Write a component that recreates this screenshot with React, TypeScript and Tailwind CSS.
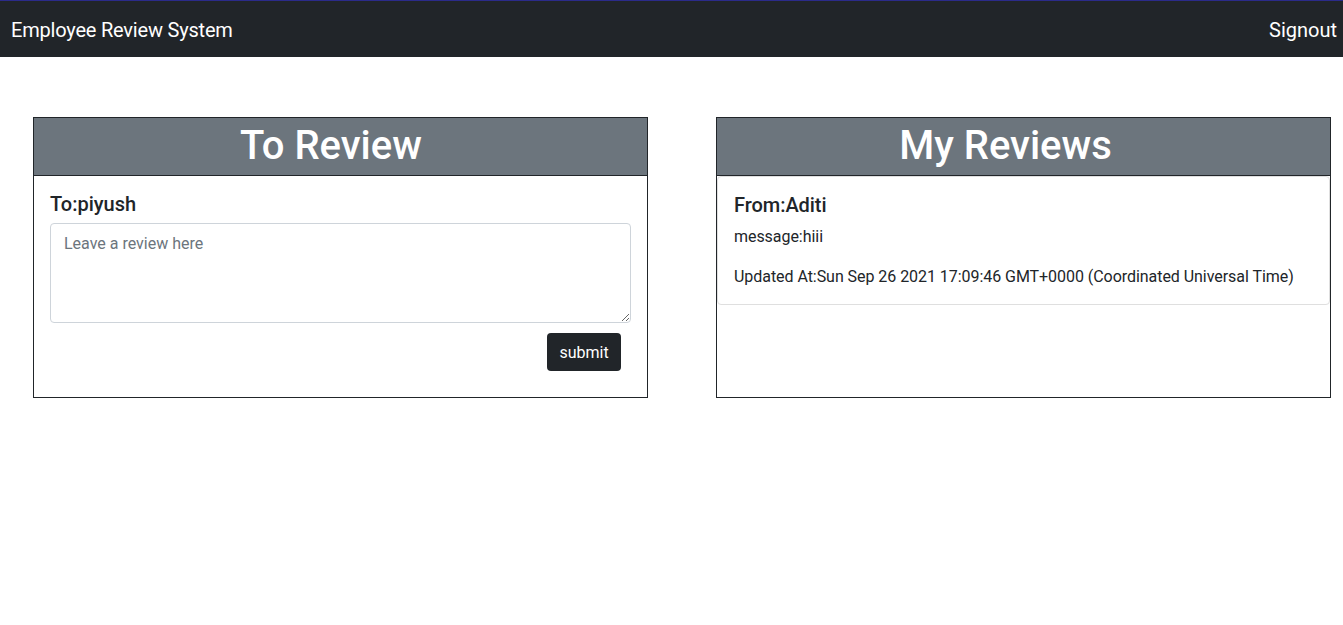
import React, { useState } from 'react';

const reviews = [
    {
        from: 'Aditi',
        message: 'hiii',
        updatedAt: 'Sun Sep 26 2021 17:09:46 GMT+0000 (Coordinated Universal Time)',
    },
];

const CardHeader: React.FC<{ title: string; shift: string }> = ({ title, shift }) => (
    <div className={`h-[58px] bg-[#6c757d] border-b border-[#212529] flex items-center justify-center ${shift}`}>
        <h1 className="text-[40px] leading-[48px] font-medium text-white -mt-[2px]">{title}</h1>
    </div>
);

const App: React.FC = () => {
    const [review, setReview] = useState('');

    return (
        <div className="min-h-[625px] bg-white text-[#212529]" style={{ fontFamily: 'Roboto, "Open Sans", sans-serif' }}>
            {/* navbar */}
            <nav className="h-[57px] bg-[#212529] border-t border-[#2b2b8a] flex items-center justify-between pl-[11px] pr-[6px] pt-[2px]">
                <span className="text-[20px] leading-[24px] text-white tracking-[-0.2px]">Employee Review System</span>
                <span className="text-[20px] leading-[24px] text-white">Signout</span>
            </nav>

            <main className="flex gap-[68px] pl-[33px] pt-[60px]">
                {/* To Review */}
                <section className="w-[615px] h-[281px] border border-[#212529] flex flex-col">
                    <CardHeader title="To Review" shift="pr-[19px]" />
                    <div className="px-4 pt-4">
                        <h5 className="text-[20px] leading-[24px] font-medium mb-[7px]">To:piyush</h5>
                        <textarea
                            value={review}
                            onChange={e => setReview(e.target.value)}
                            placeholder="Leave a review here"
                            className="block w-full h-[100px] border border-[#ced4da] rounded-[4px] pl-[13px] pr-3 pt-[8px] text-[16px] leading-[24px] placeholder:text-[#6c757d] outline-none resize-y"
                        />
                        <div className="flex justify-end mt-[10px] mr-[10px]">
                            <button className="h-[38px] w-[74px] pt-[2px] bg-[#212529] text-white text-[16px] rounded-[4px]">submit</button>
                        </div>
                    </div>
                </section>

                {/* My Reviews */}
                <section className="w-[615px] h-[281px] border border-[#212529] flex flex-col">
                    <CardHeader title="My Reviews" shift="pr-[36px]" />
                    {reviews.map((r, i) => (
                        <div key={i} className="border border-[#dfdfdf] rounded-[4px] px-4 pt-4 pb-0 tracking-[-0.05px]">
                            <h5 className="text-[20px] leading-[24px] font-medium mb-2">From:{r.from}</h5>
                            <p className="text-[16px] leading-[24px] mb-4">message:{r.message}</p>
                            <p className="text-[16px] leading-[24px] pb-[15px]">Updated At:{r.updatedAt}</p>
                        </div>
                    ))}
                </section>
            </main>
        </div>
    );
};

export default App;
